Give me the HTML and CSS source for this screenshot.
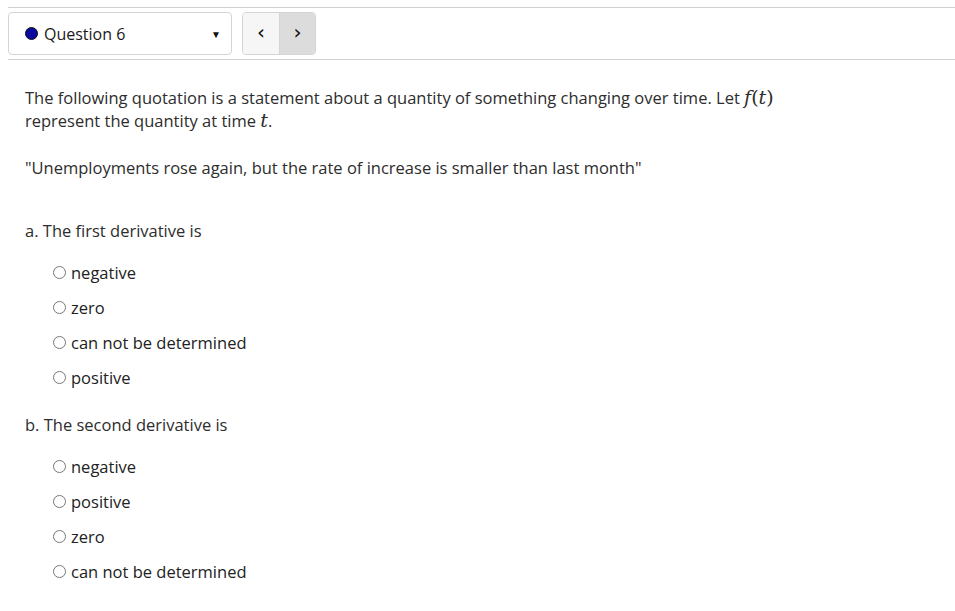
FILE: index.html
```html
<!DOCTYPE html>
<html lang="en">
  <head>
    <meta charset="UTF-8" />
    <title>Question 6</title>
    <link rel="stylesheet" href="styles.css">
  </head>
  <body>
    <div class="topbar">
      <div class="picker">
        <span class="dot"></span>
        <span class="picker-label">Question 6</span>
        <span class="caret">&#9660;</span>
      </div>
      <div class="nav">
        <button class="nav-btn">&lsaquo;</button>
        <button class="nav-btn active">&rsaquo;</button>
      </div>
    </div>

    <div class="question">
      <p class="intro">
        The following quotation is a statement about a quantity of something changing over time. Let
        <span class="math">f</span><span class="paren">(</span><span class="math">t</span><span class="paren">)</span>
        represent the quantity at time <span class="math">t</span>.
      </p>
      <p class="quote">"Unemployments rose again, but the rate of increase is smaller than last month"</p>

      <div class="part">
        <div class="part-title">a. The first derivative is</div>
        <label class="option"><input type="radio" name="a" /> negative</label>
        <label class="option"><input type="radio" name="a" /> zero</label>
        <label class="option"><input type="radio" name="a" /> can not be determined</label>
        <label class="option"><input type="radio" name="a" /> positive</label>
      </div>

      <div class="part">
        <div class="part-title">b. The second derivative is</div>
        <label class="option"><input type="radio" name="b" /> negative</label>
        <label class="option"><input type="radio" name="b" /> positive</label>
        <label class="option"><input type="radio" name="b" /> zero</label>
        <label class="option"><input type="radio" name="b" /> can not be determined</label>
      </div>
    </div>
  </body>
</html>
```

FILE: styles.css
```css
body {
  font-family: "Open Sans", "Liberation Sans", sans-serif;
  color: #2d2d2d;
  background: #fff;
  margin: 0;
  padding: 7px 0 0 8px;
  font-size: 16.5px;
}
.topbar {
  display: flex;
  align-items: center;
  gap: 10px;
  border-top: 1px solid #d0d0d0;
  border-bottom: 1px solid #d0d0d0;
  padding: 4px 0;
}
.picker {
  width: 224px;
  height: 43px;
  box-sizing: border-box;
  border: 1px solid #d4d4d4;
  border-radius: 4px;
  display: flex;
  align-items: center;
  padding: 0 10px 0 16px;
  font-size: 16px;
  color: #1a1a1a;
}
.dot {
  width: 13px;
  height: 13px;
  border-radius: 50%;
  background: #0a0a9e;
  border: 1px solid #111;
  box-sizing: border-box;
  margin-right: 6px;
}
.picker-label {
  flex: 1;
}
.caret {
  font-size: 10px;
  color: #111;
}
.nav {
  display: flex;
  border: 1px solid #d4d4d4;
  border-radius: 4px;
  overflow: hidden;
  height: 43px;
  box-sizing: border-box;
}
.nav-btn {
  width: 36px;
  border: none;
  background: #f6f6f6;
  font-family: "DejaVu Sans", sans-serif;
  font-size: 20px;
  color: #111;
  padding: 0 0 3px 0;
}
.nav-btn + .nav-btn {
  border-left: 1px solid #d4d4d4;
}
.nav-btn.active {
  background: #dcdcdc;
}
.question {
  padding: 26px 0 0 17px;
}
.intro {
  margin: 0;
  line-height: 23px;
  max-width: 780px;
}
.math {
  font-family: "DejaVu Serif", "Liberation Serif", serif;
  font-style: italic;
  font-size: 19px;
}
.paren {
  font-family: "DejaVu Serif", "Liberation Serif", serif;
  font-size: 19px;
}
.quote {
  margin: 24px 0 0 0;
  line-height: 23px;
}
.part {
  display: flex;
  flex-direction: column;
  margin-top: 40px;
}
.part + .part {
  margin-top: 18px;
}
.part-title {
  line-height: 23px;
  margin-bottom: 13px;
}
.option {
  display: flex;
  align-items: center;
  margin-left: 28px;
  height: 35px;
  color: #222;
}
.option input {
  margin: 0 5px 0 0;
  width: 13px;
  height: 13px;
}
```
